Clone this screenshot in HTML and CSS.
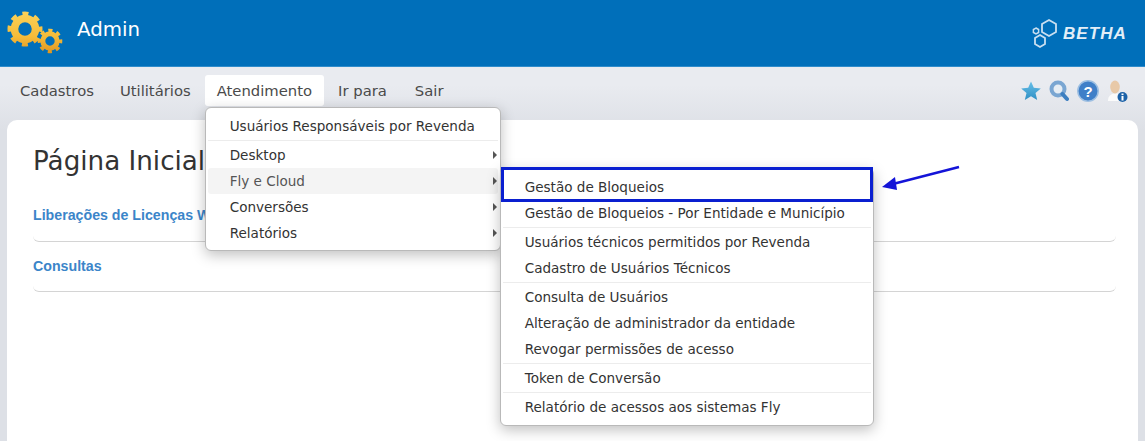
FILE: index.html
```html
<!DOCTYPE html>
<html lang="pt-BR">

<head>
    <meta charset="UTF-8">
    <title>Admin</title>
    <link rel="stylesheet" href="styles.css">
</head>

<body>
    <header class="topbar">
        <svg class="gears" viewBox="0 0 66 56" width="66" height="56">
            <defs>
                <linearGradient id="gold" gradientUnits="userSpaceOnUse" x1="0" y1="8" x2="0" y2="52">
                    <stop offset="0%" stop-color="#fbd35a" />
                    <stop offset="60%" stop-color="#f5bc3a" />
                    <stop offset="100%" stop-color="#dd9420" />
                </linearGradient>
            </defs>
            <!-- teeth are just a dashed stroke -->
            <circle cx="25" cy="27" r="15" fill="none" stroke="url(#gold)" stroke-width="5" stroke-dasharray="5.9 5.88" stroke-dashoffset="3" />
            <circle cx="25" cy="27" r="10.5" fill="none" stroke="url(#gold)" stroke-width="7.5" />
            <circle cx="50" cy="39" r="10.5" fill="none" stroke="url(#gold)" stroke-width="3.6" stroke-dasharray="4.1 4.15" stroke-dashoffset="2" />
            <circle cx="50" cy="39" r="7.2" fill="none" stroke="url(#gold)" stroke-width="5" />
        </svg>
        <span class="appName">Admin</span>
        <div class="brand">
            <svg viewBox="0 0 30 34" width="30" height="34">
                <g fill="none" stroke="#c9dff0" stroke-width="1.8">
                    <path d="M17 4 L24 8 L24 16 L17 20 L10 16 L10 8 Z" />
                    <path d="M8 19 L13 22 L13 28 L8 31 L3 28 L3 22 Z" />
                    <path d="M4 12 L6.600 13.500 L6.600 16.500 L4 18 L1.400 16.500 L1.400 13.500 Z" stroke-width="1.500" />
                </g>
            </svg>
            <span class="brandName">BETHA</span>
        </div>
    </header>

    <nav class="navbar">
        <ul class="navList">
            <li>Cadastros</li>
            <li>Utilitários</li>
            <li class="active">Atendimento
                <ul class="menu">
                    <li>Usuários Responsáveis por Revenda</li>
                    <li class="sep"></li>
                    <li class="more">Desktop</li>
                    <li class="more hover">Fly e Cloud
                        <ul class="menu submenu">
                            <li>Gestão de Bloqueios</li>
                            <li>Gestão de Bloqueios - Por Entidade e Município</li>
                            <li class="sep"></li>
                            <li>Usuários técnicos permitidos por Revenda</li>
                            <li>Cadastro de Usuários Técnicos</li>
                            <li class="sep"></li>
                            <li>Consulta de Usuários</li>
                            <li>Alteração de administrador da entidade</li>
                            <li>Revogar permissões de acesso</li>
                            <li class="sep"></li>
                            <li>Token de Conversão</li>
                            <li class="sep"></li>
                            <li>Relatório de acessos aos sistemas Fly</li>
                            <li class="mark"></li>
                        </ul>
                    </li>
                    <li class="more">Conversões</li>
                    <li class="more">Relatórios</li>
                </ul>
            </li>
            <li>Ir para</li>
            <li class="last">Sair</li>
        </ul>
        <div class="tools">
            <svg viewBox="0 0 20 20" width="20" height="20">
                <defs>
                    <linearGradient id="starBlue" x1="0" y1="0" x2="0" y2="1">
                        <stop offset="0%" stop-color="#67bfe8" />
                        <stop offset="100%" stop-color="#2f8fc4" />
                    </linearGradient>
                </defs>
                <path d="M10 0.500 L12.800 6.800 L19.800 7.500 L14.500 12 L16.200 19 L10 15.300 L3.800 19 L5.500 12 L0.200 7.500 L7.200 6.800 Z" fill="url(#starBlue)" />
            </svg>
            <svg viewBox="0 0 20 22" width="20" height="22">
                <circle cx="9" cy="9" r="6.500" fill="#e6edf4" stroke="#7aa6d2" stroke-width="4" />
                <path d="M13.500 14 L18 19" stroke="#3d7fc0" stroke-width="4" stroke-linecap="round" />
            </svg>
            <svg viewBox="0 0 22 22" width="22" height="22">
                <circle cx="11" cy="11" r="10.200" fill="#3f7fc8" stroke="#9dbfe2" stroke-width="1.500" />
                <text x="11" y="16.500" class="helpMark">?</text>
            </svg>
            <svg viewBox="0 0 22 24" width="22" height="24">
                <path d="M1 22 C1 16 5 14.500 9 14.500 C13 14.500 15 16 15 22 Z" fill="#fbfbfb" />
                <ellipse cx="8" cy="8" rx="4.800" ry="6.500" fill="#e8c9a8" />
                <circle cx="15.500" cy="18" r="5" fill="#1c62a8" />
                <rect x="14.500" y="17" width="2" height="4.500" fill="#fff" />
                <rect x="14.500" y="14.500" width="2" height="1.600" fill="#fff" />
            </svg>
        </div>
    </nav>

    <main class="card">
        <h1>Página Inicial</h1>
        <section class="block">Liberações de Licenças WEB</section>
        <section class="block second">Consultas</section>
    </main>

    <svg class="arrow" viewBox="0 0 90 30" width="90" height="30">
        <path d="M8 20 L78 2" stroke="#1414d8" stroke-width="2.500" />
        <path d="M1 22 L14 12 L16 25 Z" fill="#1414d8" />
    </svg>
</body>

</html>
```

FILE: styles.css
```css
* {
    box-sizing: border-box;
}

html, body {
    height: 100%;
}

body {
    margin: 0;
    display: flex;
    flex-direction: column;
    overflow: hidden;
    font-family: "DejaVu Sans", Verdana, sans-serif;
    background: linear-gradient(#e9ebf0 85px, #dde0e6 130px);
    color: #333;
}

ul {
    list-style: none;
    margin: 0;
    padding: 0;
}

/* top blue bar */
.topbar {
    display: flex;
    align-items: center;
    height: 67px;
    padding: 0 18px 0 0;
    background: #006fba;
    border-bottom: 1px solid #2f8ccb;
    flex-shrink: 0;
}

.gears {
    margin-bottom: 6px;
}

.appName {
    margin-left: 11px;
    margin-bottom: 8px;
    color: #fff;
    font-size: 19.800px;
}

.brand {
    display: flex;
    align-items: center;
    gap: 1px;
    margin-left: auto;
}

.brandName {
    margin-top: 2px;
    color: #e2eef7;
    font-family: "Liberation Sans", Arial, sans-serif;
    font-size: 17px;
    font-weight: bold;
    font-style: italic;
    letter-spacing: 1.100px;
}

/* menu row */
.navbar {
    display: flex;
    align-items: flex-start;
    justify-content: space-between;
    height: 53px;
    padding: 8px 16px 0 8px;
    flex-shrink: 0;
}

.navList {
    display: flex;
    gap: 2px;
}

.navList > li {
    position: relative;
    height: 31px;
    padding: 0 12px;
    line-height: 31px;
    font-size: 14.800px;
    color: #4a4a4a;
    border-radius: 3px;
}

.navList > li.active {
    background: #fff;
}

.navList > li.last {
    margin-left: 2px;
}

.tools {
    display: flex;
    align-items: center;
    gap: 8px;
    margin-top: 4px;
}

.helpMark {
    fill: #fff;
    font-family: "Liberation Sans", Arial, sans-serif;
    font-size: 15px;
    font-weight: bold;
    text-anchor: middle;
}

/* dropdowns */
.menu {
    position: absolute;
    top: 32px;
    left: 0;
    z-index: 5;
    width: 296px;
    padding: 5px 2px 4px;
    background: #fff;
    border: 1px solid #b9b9b9;
    border-radius: 6px;
    box-shadow: 0 4px 14px rgba(0, 0, 0, .25);
    font-size: 13.550px;
    color: #333;
}

.menu li {
    position: relative;
    height: 26px;
    padding-left: 22px;
    line-height: 26px;
    white-space: nowrap;
}

.menu li.sep {
    height: 1px;
    margin: 1px 0;
    padding: 0;
    background: #ececec;
}

.menu .more::after {
    content: "";
    position: absolute;
    right: 1px;
    top: 9px;
    border-left: 4px solid #555;
    border-top: 4px solid transparent;
    border-bottom: 4px solid transparent;
}

.menu .hover {
    background: #f4f4f4;
    color: #555;
    border-radius: 3px;
}

.submenu {
    top: 0;
    left: 292px;
    width: 374px;
    padding-bottom: 5px;
    color: #333;
}

.menu li.mark {
    position: absolute;
    top: -2px;
    left: 0;
    width: 372px;
    height: 35px;
    padding: 0;
    border: 3px solid #0a1fd0;
}

/* page content */
.card {
    flex: 1;
    margin: 0 7px;
    padding: 24px 22px 0 26px;
    background: #fff;
    border-radius: 10px 10px 0 0;
}

h1 {
    margin: 0 0 29px;
    font-size: 26.200px;
    font-weight: normal;
    line-height: 34px;
    color: #333;
}

.block {
    height: 35px;
    border-bottom: 1px solid #d4d4d4;
    border-radius: 0 0 6px 6px;
    font-family: "Liberation Sans", Arial, sans-serif;
    font-size: 14.200px;
    font-weight: bold;
    line-height: 17px;
    color: #3b85c9;
}

.second {
    height: 34px;
    margin-top: 16px;
}

.arrow {
    position: absolute;
    top: 165px;
    left: 881px;
}
```
